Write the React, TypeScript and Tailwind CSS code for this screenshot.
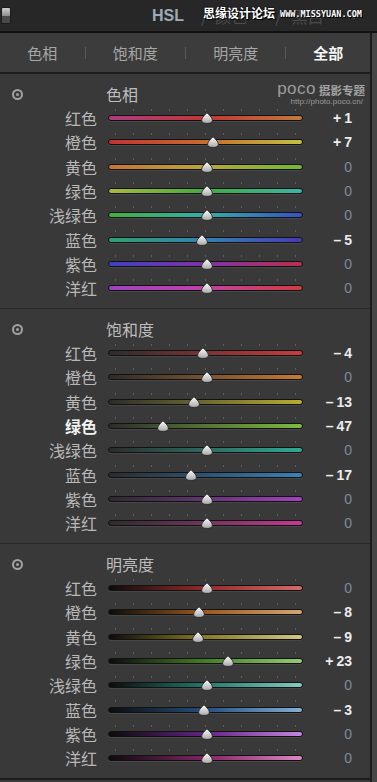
import React from 'react'

type Row = { label: string; v: number; g: string; hot?: boolean }

const hue: Row[] = [
  { label: '红色', v: 1, g: 'bg-[linear-gradient(90deg,#b03a82,#c23636_50%,#c27a38)]' },
  { label: '橙色', v: 7, g: 'bg-[linear-gradient(90deg,#c23232,#c86c30_50%,#c2c23e)]' },
  { label: '黄色', v: 0, g: 'bg-[linear-gradient(90deg,#c87432,#b8a834_50%,#72b834)]' },
  { label: '绿色', v: 0, g: 'bg-[linear-gradient(90deg,#aab83e,#42aa42_50%,#3cb4a6)]' },
  { label: '浅绿色', v: 0, g: 'bg-[linear-gradient(90deg,#40b040,#30b0aa_50%,#3650c4)]' },
  { label: '蓝色', v: -5, g: 'bg-[linear-gradient(90deg,#30a070,#3282b4_50%,#4a38b4)]' },
  { label: '紫色', v: 0, g: 'bg-[linear-gradient(90deg,#4040c2,#8032a6_50%,#b8304e)]' },
  { label: '洋红', v: 0, g: 'bg-[linear-gradient(90deg,#a040c6,#c440a6_50%,#d23c3c)]' },
]

const sat: Row[] = [
  { label: '红色', v: -4, g: 'bg-[linear-gradient(90deg,#2c2c2c,#7a3434_50%,#c83c3c)]' },
  { label: '橙色', v: 0, g: 'bg-[linear-gradient(90deg,#2c2c2c,#7a5230_50%,#c87a30)]' },
  { label: '黄色', v: -13, g: 'bg-[linear-gradient(90deg,#2c2c2c,#6e6a30_50%,#b8ae30)]' },
  { label: '绿色', v: -47, g: 'bg-[linear-gradient(90deg,#2c2c2c,#547434_50%,#7cbc40)]', hot: true },
  { label: '浅绿色', v: 0, g: 'bg-[linear-gradient(90deg,#2c2c2c,#2e6a60_50%,#30aa94)]' },
  { label: '蓝色', v: -17, g: 'bg-[linear-gradient(90deg,#2c2c2c,#2e5474_50%,#3882ba)]' },
  { label: '紫色', v: 0, g: 'bg-[linear-gradient(90deg,#2c2c2c,#633474_50%,#a442bc)]' },
  { label: '洋红', v: 0, g: 'bg-[linear-gradient(90deg,#2c2c2c,#73345c_50%,#c43a92)]' },
]

const lum: Row[] = [
  { label: '红色', v: 0, g: 'bg-[linear-gradient(90deg,#0c0c0c,#962a2a_50%,#d46a6a)]' },
  { label: '橙色', v: -8, g: 'bg-[linear-gradient(90deg,#0c0c0c,#9a5a20_50%,#d4a672)]' },
  { label: '黄色', v: -9, g: 'bg-[linear-gradient(90deg,#0c0c0c,#8a7c22_50%,#d2c884)]' },
  { label: '绿色', v: 23, g: 'bg-[linear-gradient(90deg,#0c0c0c,#447e24_50%,#94cc74)]' },
  { label: '浅绿色', v: 0, g: 'bg-[linear-gradient(90deg,#0c0c0c,#227a6c_50%,#84ccc0)]' },
  { label: '蓝色', v: -3, g: 'bg-[linear-gradient(90deg,#0c0c0c,#235080_50%,#84b0d4)]' },
  { label: '紫色', v: 0, g: 'bg-[linear-gradient(90deg,#0c0c0c,#642284_50%,#c486e0)]' },
  { label: '洋红', v: 0, g: 'bg-[linear-gradient(90deg,#0c0c0c,#842264_50%,#e086c2)]' },
]

const cjk = "font-['Noto_Sans_CJK_SC','Noto_Sans',sans-serif]"

function Thumb() {
  return (
    <svg width="12" height="12" viewBox="0 0 12 12">
      <defs>
        <linearGradient id="thumbFill" x1="0" y1="0" x2="0" y2="1">
          <stop offset="0" stopColor="#ffffff" />
          <stop offset="1" stopColor="#a8a8a8" />
        </linearGradient>
      </defs>
      <path
        d="M6 0.6C7.4 3 11.4 5 11.4 8.2C11.4 10.6 9.2 11.4 6 11.4C2.8 11.4 0.6 10.6 0.6 8.2C0.6 5 4.6 3 6 0.6Z"
        fill="url(#thumbFill)"
        stroke="#1a1a1a"
        strokeWidth="0.8"
      />
    </svg>
  )
}

function Slider({ row }: { row: Row }) {
  const left = 98.5 + row.v * 0.93 - 6
  return (
    <div className="relative w-[195px] h-full flex items-center">
      {/* ticks */}
      <div className="absolute left-[7px] right-[7px] top-[3px] flex justify-between">
        {Array.from({ length: 11 }).map((_, i) => (
          <span key={i} className="w-px h-[2px] bg-[#5e5e5e]" />
        ))}
      </div>
      <div className={`w-full h-[6px] rounded-full border border-[#121212] shadow-[0_1px_0_#474747] ${row.g}`} />
      <div className="absolute top-1/2 -translate-y-1/2 flex" style={{ left }}>
        <Thumb />
      </div>
    </div>
  )
}

function Value({ v }: { v: number }) {
  if (v === 0) return <span className="text-[#7d8b9c]">0</span>
  return (
    <span className="text-[#ececec] font-bold flex items-center gap-[3px]">
      <span>{v > 0 ? '+' : '–'}</span>
      <span>{Math.abs(v)}</span>
    </span>
  )
}

function Section({ title, rows, poco }: { title: string; rows: Row[]; poco?: boolean }) {
  return (
    <div className="h-[234px] pt-[10px] flex flex-col">
      <div className="relative h-[20px] flex items-center">
        <div className="ml-[12px] w-[11px] h-[11px] rounded-full border-2 border-[#a2a2a2] flex items-center justify-center">
          <span className="w-[3px] h-[3px] rounded-full bg-[#a2a2a2]" />
        </div>
        <span className="ml-[83px] text-[16px] text-[#bdbdbd] leading-none">{title}</span>
        {poco && (
          <div className="absolute right-[5px] top-[-4px] flex flex-col items-end leading-none">
            <div className="flex items-end gap-[3px]">
              <span className="font-['Liberation_Sans',sans-serif] text-[17px] text-[#9c9c9c] tracking-[0.5px] leading-none">poco</span>
              <span className="text-[11.5px] font-bold text-[#a4a4a4] leading-none mb-[1px]">摄影专题</span>
            </div>
            <span className="font-['Liberation_Sans',sans-serif] text-[8px] text-[#9a9a9a] mt-[1px] mr-[2px]">http://photo.poco.cn/</span>
          </div>
        )}
      </div>
      <div className="mt-[2px] flex flex-col">
        {rows.map((r) => (
          <div key={r.label} className="h-[24.3px] flex items-center">
            <span
              className={`w-[97px] text-right text-[16px] leading-none ${
                r.hot ? 'text-[#f2f2f2] font-bold' : 'text-[#b8b8b8]'
              }`}
            >
              {r.label}
            </span>
            <div className="ml-[11px] h-full">
              <Slider row={r} />
            </div>
            <div className="w-[49px] flex justify-end font-['Liberation_Sans',sans-serif] text-[14px] leading-none">
              <Value v={r.v} />
            </div>
          </div>
        ))}
      </div>
    </div>
  )
}

const tabs = [
  { label: '色相', w: 'w-[85px]' },
  { label: '饱和度', w: 'w-[100px]' },
  { label: '明亮度', w: 'w-[100px]' },
  { label: '全部', w: 'w-[84px]', active: true },
]

export default function App() {
  return (
    <div className={`w-[377px] h-[782px] overflow-hidden bg-[#282828] flex flex-col ${cjk}`}>
      {/* Top bar */}
      <div className="relative h-[31px] shrink-0 bg-[#272727] flex items-center">
        <div className="ml-[1px] w-[10px] h-[17px] rounded-[2px] border border-[#1a1a1a] flex flex-col overflow-hidden">
          <span className="h-1/2 bg-[linear-gradient(180deg,#d0d0d0,#8c8c8c)]" />
          <span className="h-1/2 bg-[#4a4a4a]" />
        </div>
        <span className="ml-[141px] font-['Liberation_Sans',sans-serif] font-bold text-[16px] text-[#9eaab8] leading-none">HSL</span>
        <span className="ml-[17px] text-[#4c4c4c] text-[16px] leading-none">/</span>
        <span className="ml-[8px] text-[#4c4c4c] text-[16px] leading-none">颜色</span>
        <span className="ml-[28px] text-[#4c4c4c] text-[16px] leading-none">/</span>
        <span className="ml-[10px] text-[#4c4c4c] text-[16px] leading-none">黑白</span>
        <span className="ml-[26px] text-[#5a5a5a] text-[9px] leading-none">▼</span>
        {/* watermark */}
        <div className="absolute left-[203px] top-[7px] flex items-end gap-[5px]">
          <span className="text-[12px] font-bold text-white leading-none [text-shadow:0_0_1px_#000,0_0_2px_#000,1px_1px_0_#000]">思缘设计论坛</span>
          <span className="font-['DejaVu_Sans_Mono',monospace] text-[8.5px] font-bold text-white leading-none mb-[1px] [text-shadow:0_0_1px_#000,1px_1px_0_#000]">WWW.MISSYUAN.COM</span>
        </div>
      </div>
      <div className="h-[2px] shrink-0 bg-[#121212]" />

      <div className="flex flex-1">
        <div className="w-[370px] flex flex-col bg-[#393939]">
          {/* Tabs */}
          <div className="h-[39px] bg-[#3c3c3c] flex items-center">
            {tabs.map((t, i) => (
              <React.Fragment key={t.label}>
                {i > 0 && <span className="w-px h-[12px] bg-[#5a5a5a]" />}
                <span
                  className={`${t.w} text-center text-[15px] leading-none ${
                    t.active ? 'text-[#f4f4f4] font-bold' : 'text-[#a6a6a6]'
                  }`}
                >
                  {t.label}
                </span>
              </React.Fragment>
            ))}
          </div>
          <div className="h-[2px] bg-[#1e1e1e]" />

          <Section title="色相" rows={hue} poco />
          <div className="h-px bg-[#2a2a2a]" />
          <Section title="饱和度" rows={sat} />
          <div className="h-px bg-[#2a2a2a]" />
          <Section title="明亮度" rows={lum} />
          <div className="h-[2px] bg-[#1c1c1c]" />
          <div className="flex-1 bg-[#3a3a3a]" />
        </div>
        <div className="w-[2px] bg-[#1c1c1c]" />
        <div className="flex-1 bg-[#464646]" />
      </div>
    </div>
  )
}
